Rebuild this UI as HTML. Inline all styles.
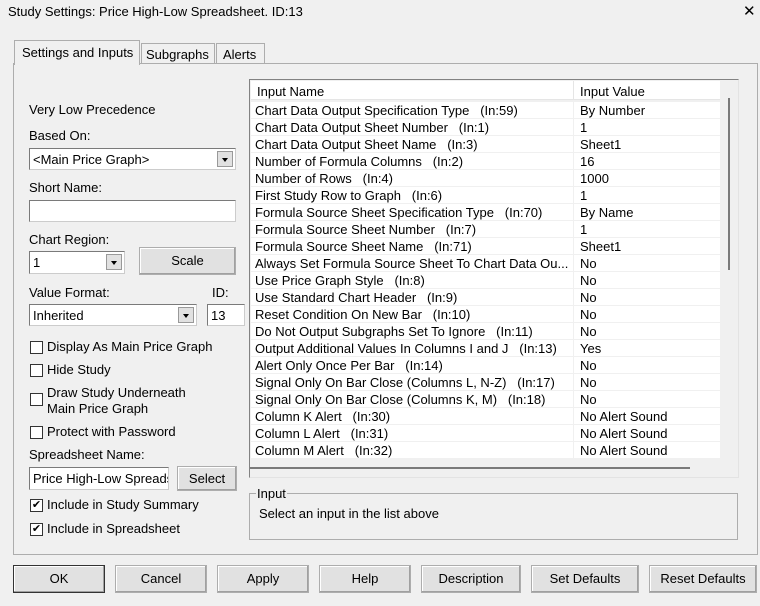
<!DOCTYPE html>
<html><head><style>
*{box-sizing:border-box}
body{margin:0;width:760px;height:606px;background:#f0f0f0;font-family:"Liberation Sans",sans-serif;font-size:13px;color:#000;position:relative;overflow:hidden}
.a{position:absolute;white-space:nowrap}
.btn{position:absolute;background:#e1e1e1;border:1px solid #adadad;box-shadow:inset -1px -1px 0 #a0a0a0,inset 1px 1px 0 #fff;text-align:center;line-height:26px;height:28px}
.bb{border:1px solid #333}
.inp{position:absolute;background:#fff;border:1px solid #7a7a7a;border-right-color:#ccc;border-bottom-color:#ccc;padding-left:3px;padding-top:1px;line-height:19px;height:22px;white-space:nowrap;overflow:hidden}
.dd{position:absolute;right:2px;top:2px;width:16px;height:16px;background:#e1e1e1;border:1px solid #999}
.dd:after{content:"";position:absolute;left:4px;top:6px;border-left:3.5px solid transparent;border-right:3.5px solid transparent;border-top:4px solid #000}
.cb{position:absolute;width:13px;height:13px;border:1px solid #333;background:#fff;font-size:11px;line-height:11px;text-align:center}
.row{position:absolute;left:251px;width:469px;height:17px;border-bottom:1px solid #f0f0f0;background:#fff}
.row span{position:absolute;top:0;line-height:17px}
</style></head><body>
<div class="a" style="left:8px;top:4px;font-size:13px">Study Settings: Price High-Low Spreadsheet. ID:13</div>
<div class="a" style="left:743px;top:2px;font-size:15px;font-weight:300">✕</div>

<div class="a" style="left:13px;top:63px;width:745px;height:492px;border:1px solid #adadad;background:#f0f0f0"></div>
<div class="a" style="left:14px;top:40px;width:126px;height:25px;border:1px solid #adadad;border-bottom:none;background:#f0f0f0;padding:4px 0 0 7px">Settings and Inputs</div>
<div class="a" style="left:141px;top:43px;width:74px;height:21px;border:1px solid #adadad;border-bottom:none;padding:3px 0 0 4px">Subgraphs</div>
<div class="a" style="left:216px;top:43px;width:49px;height:21px;border:1px solid #adadad;border-bottom:none;padding:3px 0 0 6px">Alerts</div>

<div class="a" style="left:29px;top:102px">Very Low Precedence</div>
<div class="a" style="left:29px;top:128px">Based On:</div>
<div class="inp" style="left:29px;top:148px;width:207px;height:22px">&lt;Main Price Graph&gt;<div class="dd"></div></div>
<div class="a" style="left:29px;top:180px">Short Name:</div>
<div class="inp" style="left:29px;top:200px;width:207px"></div>
<div class="a" style="left:29px;top:232px">Chart Region:</div>
<div class="inp" style="left:29px;top:251px;width:96px;height:23px">1<div class="dd"></div></div>
<div class="btn" style="left:139px;top:247px;width:97px">Scale</div>
<div class="a" style="left:29px;top:285px">Value Format:</div>
<div class="a" style="left:212px;top:285px">ID:</div>
<div class="inp" style="left:29px;top:304px;width:168px;height:22px">Inherited<div class="dd"></div></div>
<div class="inp" style="left:207px;top:304px;width:38px;height:22px">13</div>
<div class="cb" style="left:30px;top:341px"></div><div class="a" style="left:47px;top:339px">Display As Main Price Graph</div>
<div class="cb" style="left:30px;top:364px"></div><div class="a" style="left:47px;top:362px">Hide Study</div>
<div class="cb" style="left:30px;top:393px"></div><div class="a" style="left:47px;top:385px;line-height:16px">Draw Study Underneath<br>Main Price Graph</div>
<div class="cb" style="left:30px;top:426px"></div><div class="a" style="left:47px;top:424px">Protect with Password</div>
<div class="a" style="left:29px;top:447px">Spreadsheet Name:</div>
<div class="inp" style="left:29px;top:467px;width:140px;height:23px">Price High-Low Spreadsheet</div>
<div class="btn" style="left:177px;top:466px;width:60px;height:25px;line-height:23px">Select</div>
<div class="cb" style="left:30px;top:499px">✔</div><div class="a" style="left:47px;top:497px">Include in Study Summary</div>
<div class="cb" style="left:30px;top:523px">✔</div><div class="a" style="left:47px;top:521px">Include in Spreadsheet</div>

<div class="a" style="left:249px;top:79px;width:490px;height:399px;border:1px solid #828282;border-right-color:#e3e3e3;border-bottom-color:#e3e3e3;background:#f0f0f0"></div>
<div class="a" style="left:251px;top:81px;width:469px;height:19px;background:#fff;border-bottom:1px solid #e5e5e5"></div>
<div class="a" style="left:573px;top:81px;width:1px;height:19px;background:#e5e5e5"></div>
<div class="a" style="left:257px;top:84px">Input Name</div>
<div class="a" style="left:580px;top:84px">Input Value</div>
<div class="a" style="left:728px;top:98px;width:2px;height:172px;background:#7a7a7a"></div>
<div class="a" style="left:250px;top:467px;width:440px;height:2px;background:#7a7a7a"></div>

<div class="row" style="top:102px"><span style="left:4px">Chart Data Output Specification Type&nbsp;&nbsp; (In:59)</span><span style="left:329px">By Number</span></div>
<div class="row" style="top:119px"><span style="left:4px">Chart Data Output Sheet Number&nbsp;&nbsp; (In:1)</span><span style="left:329px">1</span></div>
<div class="row" style="top:136px"><span style="left:4px">Chart Data Output Sheet Name&nbsp;&nbsp; (In:3)</span><span style="left:329px">Sheet1</span></div>
<div class="row" style="top:153px"><span style="left:4px">Number of Formula Columns&nbsp;&nbsp; (In:2)</span><span style="left:329px">16</span></div>
<div class="row" style="top:170px"><span style="left:4px">Number of Rows&nbsp;&nbsp; (In:4)</span><span style="left:329px">1000</span></div>
<div class="row" style="top:187px"><span style="left:4px">First Study Row to Graph&nbsp;&nbsp; (In:6)</span><span style="left:329px">1</span></div>
<div class="row" style="top:204px"><span style="left:4px">Formula Source Sheet Specification Type&nbsp;&nbsp; (In:70)</span><span style="left:329px">By Name</span></div>
<div class="row" style="top:221px"><span style="left:4px">Formula Source Sheet Number&nbsp;&nbsp; (In:7)</span><span style="left:329px">1</span></div>
<div class="row" style="top:238px"><span style="left:4px">Formula Source Sheet Name&nbsp;&nbsp; (In:71)</span><span style="left:329px">Sheet1</span></div>
<div class="row" style="top:255px"><span style="left:4px">Always Set Formula Source Sheet To Chart Data Ou...</span><span style="left:329px">No</span></div>
<div class="row" style="top:272px"><span style="left:4px">Use Price Graph Style&nbsp;&nbsp; (In:8)</span><span style="left:329px">No</span></div>
<div class="row" style="top:289px"><span style="left:4px">Use Standard Chart Header&nbsp;&nbsp; (In:9)</span><span style="left:329px">No</span></div>
<div class="row" style="top:306px"><span style="left:4px">Reset Condition On New Bar&nbsp;&nbsp; (In:10)</span><span style="left:329px">No</span></div>
<div class="row" style="top:323px"><span style="left:4px">Do Not Output Subgraphs Set To Ignore&nbsp;&nbsp; (In:11)</span><span style="left:329px">No</span></div>
<div class="row" style="top:340px"><span style="left:4px">Output Additional Values In Columns I and J&nbsp;&nbsp; (In:13)</span><span style="left:329px">Yes</span></div>
<div class="row" style="top:357px"><span style="left:4px">Alert Only Once Per Bar&nbsp;&nbsp; (In:14)</span><span style="left:329px">No</span></div>
<div class="row" style="top:374px"><span style="left:4px">Signal Only On Bar Close (Columns L, N-Z)&nbsp;&nbsp; (In:17)</span><span style="left:329px">No</span></div>
<div class="row" style="top:391px"><span style="left:4px">Signal Only On Bar Close (Columns K, M)&nbsp;&nbsp; (In:18)</span><span style="left:329px">No</span></div>
<div class="row" style="top:408px"><span style="left:4px">Column K Alert&nbsp;&nbsp; (In:30)</span><span style="left:329px">No Alert Sound</span></div>
<div class="row" style="top:425px"><span style="left:4px">Column L Alert&nbsp;&nbsp; (In:31)</span><span style="left:329px">No Alert Sound</span></div>
<div class="row" style="top:442px"><span style="left:4px">Column M Alert&nbsp;&nbsp; (In:32)</span><span style="left:329px">No Alert Sound</span></div>
<div class="a" style="left:573px;top:102px;width:1px;height:357px;background:#f0f0f0"></div>

<div class="a" style="left:249px;top:493px;width:489px;height:47px;border:1px solid #adadad"></div>
<div class="a" style="left:256px;top:486px;background:#f0f0f0;padding:0 1px">Input</div>
<div class="a" style="left:259px;top:506px">Select an input in the list above</div>

<div class="btn bb" style="left:13px;top:565px;width:92px">OK</div>
<div class="btn" style="left:115px;top:565px;width:92px">Cancel</div>
<div class="btn" style="left:217px;top:565px;width:92px">Apply</div>
<div class="btn" style="left:319px;top:565px;width:92px">Help</div>
<div class="btn" style="left:421px;top:565px;width:100px">Description</div>
<div class="btn" style="left:531px;top:565px;width:108px">Set Defaults</div>
<div class="btn" style="left:649px;top:565px;width:108px">Reset Defaults</div>
</body></html>
